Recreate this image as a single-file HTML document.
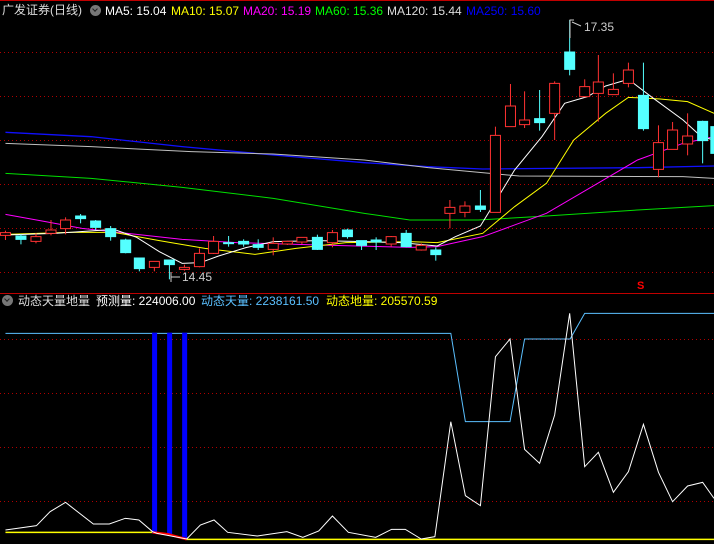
<!DOCTYPE html>
<html><head><meta charset="utf-8"><style>
html,body{margin:0;padding:0;background:#000;width:714px;height:544px;overflow:hidden}
.t{position:absolute;font-family:"Liberation Sans","Noto Sans CJK SC",sans-serif;font-size:12px;white-space:nowrap;line-height:14px}
.ic{position:absolute;width:11px;height:11px;border-radius:50%;background:#777}
.ic:after{content:"";position:absolute;left:3px;top:2px;width:3px;height:3px;border-right:1.5px solid #222;border-bottom:1.5px solid #222;transform:rotate(45deg)}
</style></head><body>
<svg width="714" height="544" style="position:absolute;left:0;top:0">
<line x1="0" y1="0.5" x2="714" y2="0.5" stroke="#c00000"/>
<g stroke="#b00000" stroke-dasharray="1,3">
<line x1="0" y1="52.5" x2="714" y2="52.5"/><line x1="0" y1="96.5" x2="714" y2="96.5"/>
<line x1="0" y1="140.5" x2="714" y2="140.5"/><line x1="0" y1="184.5" x2="714" y2="184.5"/>
<line x1="0" y1="228.5" x2="714" y2="228.5"/><line x1="0" y1="272.5" x2="714" y2="272.5"/>
<line x1="0" y1="339.5" x2="714" y2="339.5"/><line x1="0" y1="393.5" x2="714" y2="393.5"/>
<line x1="0" y1="447.5" x2="714" y2="447.5"/><line x1="0" y1="501.5" x2="714" y2="501.5"/>
</g>
<line x1="0" y1="293.5" x2="714" y2="293.5" stroke="#c00000"/>
<g transform="scale(0.45537,0.33333)" fill="none">
<polyline vector-effect="non-scaling-stroke" stroke="#1010ff" stroke-width="1.3" points="12,397 200,410 400,440 600,465 800,488 940,500 1060,507 1400,503 1568,498"/>
<polyline vector-effect="non-scaling-stroke" stroke="#c0c0c0" points="12,430 200,440 420,455 600,462 800,480 940,503 1140,528 1500,530 1568,535"/>
<polyline vector-effect="non-scaling-stroke" stroke="#00e000" points="12,520 200,535 400,562 600,595 800,640 900,660 1050,660 1200,648 1400,630 1568,617"/>
<polyline vector-effect="non-scaling-stroke" stroke="#ff00ff" points="12,643 100,665 180,685 280,700 400,718 520,728 700,735 900,742 960,740 1060,710 1200,640 1300,560 1400,480 1500,430 1568,410"/>
<polyline vector-effect="non-scaling-stroke" stroke="#ffff00" points="12,703 150,697 250,697 350,722 450,745 560,763 650,745 760,728 900,725 960,728 1060,700 1130,620 1200,550 1260,420 1330,340 1380,292 1450,297 1510,305 1568,340"/>
<polyline vector-effect="non-scaling-stroke" stroke="#ffffff" points="12,705 120,700 250,688 300,712 350,755 400,790 440,788 480,768 540,743 600,725 700,722 800,725 880,728 960,738 1000,710 1055,678 1090,600 1130,510 1190,410 1240,310 1290,290 1330,258 1380,238 1430,290 1500,360 1540,410 1568,420"/>
<g id="c"></g>
</g>
<g transform="translate(0,285) scale(0.45537,0.33333)" fill="none">
<polyline vector-effect="non-scaling-stroke" stroke="#5bc0ff" points="12,145 990,145 1022,410 1120,410 1152,162 1252,162 1284,85 1568,85"/>
<polyline vector-effect="non-scaling-stroke" stroke="#ffff00" stroke-width="1.5" points="12,742 335,742"/>
<polyline vector-effect="non-scaling-stroke" stroke="#ffff00" stroke-width="1.5" points="410,763 1568,763"/>
<g fill="#0000ff"><rect x="334" y="143" width="11" height="602"/><rect x="367" y="143" width="11" height="607"/><rect x="400" y="143" width="11" height="620"/></g>
<polyline vector-effect="non-scaling-stroke" stroke="#ff0000" stroke-width="2.5" points="335,742 370,748 410,763"/>
<polyline vector-effect="non-scaling-stroke" stroke="#ffffff" points="12,735 80,722 110,680 144,652 170,680 205,717 240,717 275,700 305,705 335,740 345,745 410,762 440,720 470,705 500,742 565,753 630,740 665,757 700,738 730,693 765,742 825,757 860,733 890,733 925,762 955,755 990,410 1022,632 1055,662 1088,215 1120,162 1152,493 1185,535 1218,390 1251,85 1284,545 1314,502 1347,622 1380,560 1413,418 1446,562 1477,650 1510,603 1543,592 1568,640"/>
</g>
<g stroke="#ccc" fill="none"><polyline points="570,38 570,20 574,20"/><line x1="572" y1="22" x2="581" y2="26"/>
<polyline points="171,282 171,272"/><line x1="171" y1="277" x2="180" y2="277"/></g>
</svg>
<script>
var d=[[12,'r',692,698,706,720],[46,'c',703,708,718,733],[79,'r',700,710,724,730],[112,'r',660,690,700,706],[144,'r',652,660,686,703],[177,'c',642,648,656,670],[210,'c',660,663,682,690],[243,'c',678,686,710,722],[276,'c',716,720,758,760],[306,'c',774,774,806,814],[339,'r',784,784,802,814],[372,'c',780,780,794,838],[405,'r',794,802,808,812],[438,'r',745,760,800,802],[469,'r',708,724,760,762],[502,'c',708,728,731,740],[535,'c',718,724,732,740],[567,'c',718,734,742,750],[600,'r',712,730,748,766],[631,'r',722,724,732,735],[663,'r',712,712,726,732],[697,'c',704,712,748,750],[730,'r',690,698,728,742],[763,'c',686,690,710,716],[794,'c',722,722,736,750],[826,'c',712,720,726,750],[859,'r',708,710,732,740],[892,'c',690,700,740,742],[925,'r',730,736,750,752],[957,'c',742,750,764,782],[988,'r',600,622,640,685],[1021,'r',604,618,637,652],[1055,'c',570,618,628,636],[1088,'r',380,406,637,637],[1121,'r',252,318,380,380],[1152,'r',274,360,374,384],[1185,'c',270,356,368,392],[1218,'r',244,250,340,420],[1251,'c',60,156,208,226],[1284,'r',238,260,290,292],[1314,'r',165,246,280,365],[1347,'r',220,268,284,284],[1380,'r',188,210,250,262],[1413,'c',188,286,386,392],[1446,'r',376,428,508,532],[1477,'r',366,390,448,448],[1510,'r',340,408,432,466],[1543,'c',362,364,422,490],[1572,'c',380,380,460,460]];
var s='';d.forEach(function(a){var x=a[0],col=a[1]=='r'?'#ff3232':'#54ffff';
s+='<line vector-effect="non-scaling-stroke" x1="'+x+'" y1="'+a[2]+'" x2="'+x+'" y2="'+a[5]+'" stroke="'+col+'"/>';
var h=Math.max(a[4]-a[3],3);
s+='<rect vector-effect="non-scaling-stroke" x="'+(x-11)+'" y="'+a[3]+'" width="22" height="'+h+'" stroke="'+col+'" fill="'+(a[1]=='r'?'#000':col)+'"/>';});
document.getElementById('c').innerHTML=s;
</script>
<div class="t" style="left:2px;top:3px;color:#ddd;font-size:12px">广发证券(日线)</div>
<div class="ic" style="left:90px;top:5px"></div>
<div class="t" style="left:105px;top:4px;color:#fff">MA5: 15.04</div>
<div class="t" style="left:171px;top:4px;color:#ffff00">MA10: 15.07</div>
<div class="t" style="left:243px;top:4px;color:#ff00ff">MA20: 15.19</div>
<div class="t" style="left:315px;top:4px;color:#00ff00">MA60: 15.36</div>
<div class="t" style="left:387px;top:4px;color:#ddd">MA120: 15.44</div>
<div class="t" style="left:466px;top:4px;color:#0000ff">MA250: 15.60</div>
<div class="t" style="left:584px;top:20px;color:#ccc">17.35</div>
<div class="t" style="left:182px;top:270px;color:#ccc">14.45</div>
<div class="t" style="left:637px;top:279px;color:#ff0000;font-size:11px;font-weight:bold">S</div>
<div class="ic" style="left:2px;top:295px"></div>
<div class="t" style="left:18px;top:294px;color:#ddd;font-size:12px">动态天量地量</div>
<div class="t" style="left:96px;top:294px;color:#fff">预测量: 224006.00</div>
<div class="t" style="left:201px;top:294px;color:#5bc0ff">动态天量: 2238161.50</div>
<div class="t" style="left:326px;top:294px;color:#ffff00">动态地量: 205570.59</div>
</body></html>
